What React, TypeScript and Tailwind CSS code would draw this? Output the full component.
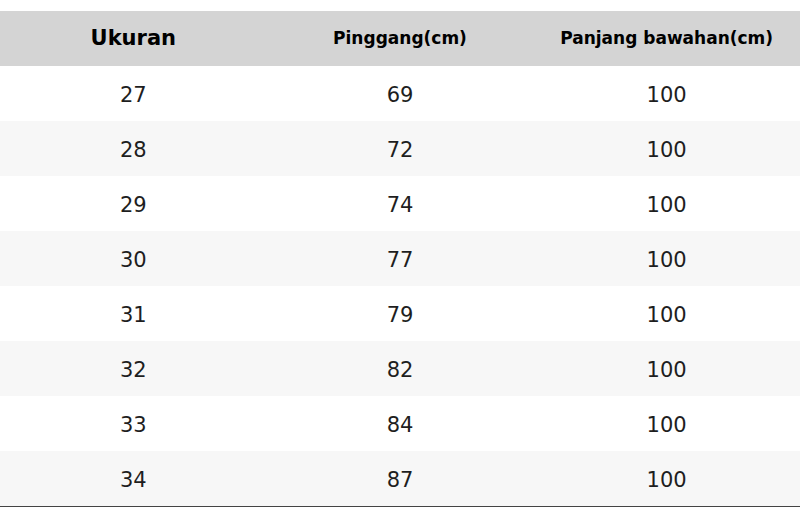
const rows = [
  ["27", "69", "100"],
  ["28", "72", "100"],
  ["29", "74", "100"],
  ["30", "77", "100"],
  ["31", "79", "100"],
  ["32", "82", "100"],
  ["33", "84", "100"],
  ["34", "87", "100"],
];

export default function App() {
  return (
    <div className="w-[800px] h-[507px] bg-white pt-[11px] overflow-hidden font-['DejaVu_Sans',sans-serif] text-[#1e1e1e]">
      {/* header */}
      <div className="grid grid-cols-3 h-[55px] bg-[#d4d4d4] items-center text-center font-bold text-black">
        <div className="text-[21px]">Ukuran</div>
        <div className="text-[17px]">Pinggang(cm)</div>
        <div className="text-[17px]">Panjang bawahan(cm)</div>
      </div>

      {/* rows */}
      <div className="border-b-2 border-[#444]">
        {rows.map((r, i) => (
          <div
            key={r[0]}
            className={`grid grid-cols-3 h-[55px] pt-1 items-center text-center text-[21px] ${i % 2 === 1 ? "bg-[#f7f7f7]" : "bg-white"}`}
          >
            <div>{r[0]}</div>
            <div>{r[1]}</div>
            <div>{r[2]}</div>
          </div>
        ))}
      </div>
    </div>
  );
}
